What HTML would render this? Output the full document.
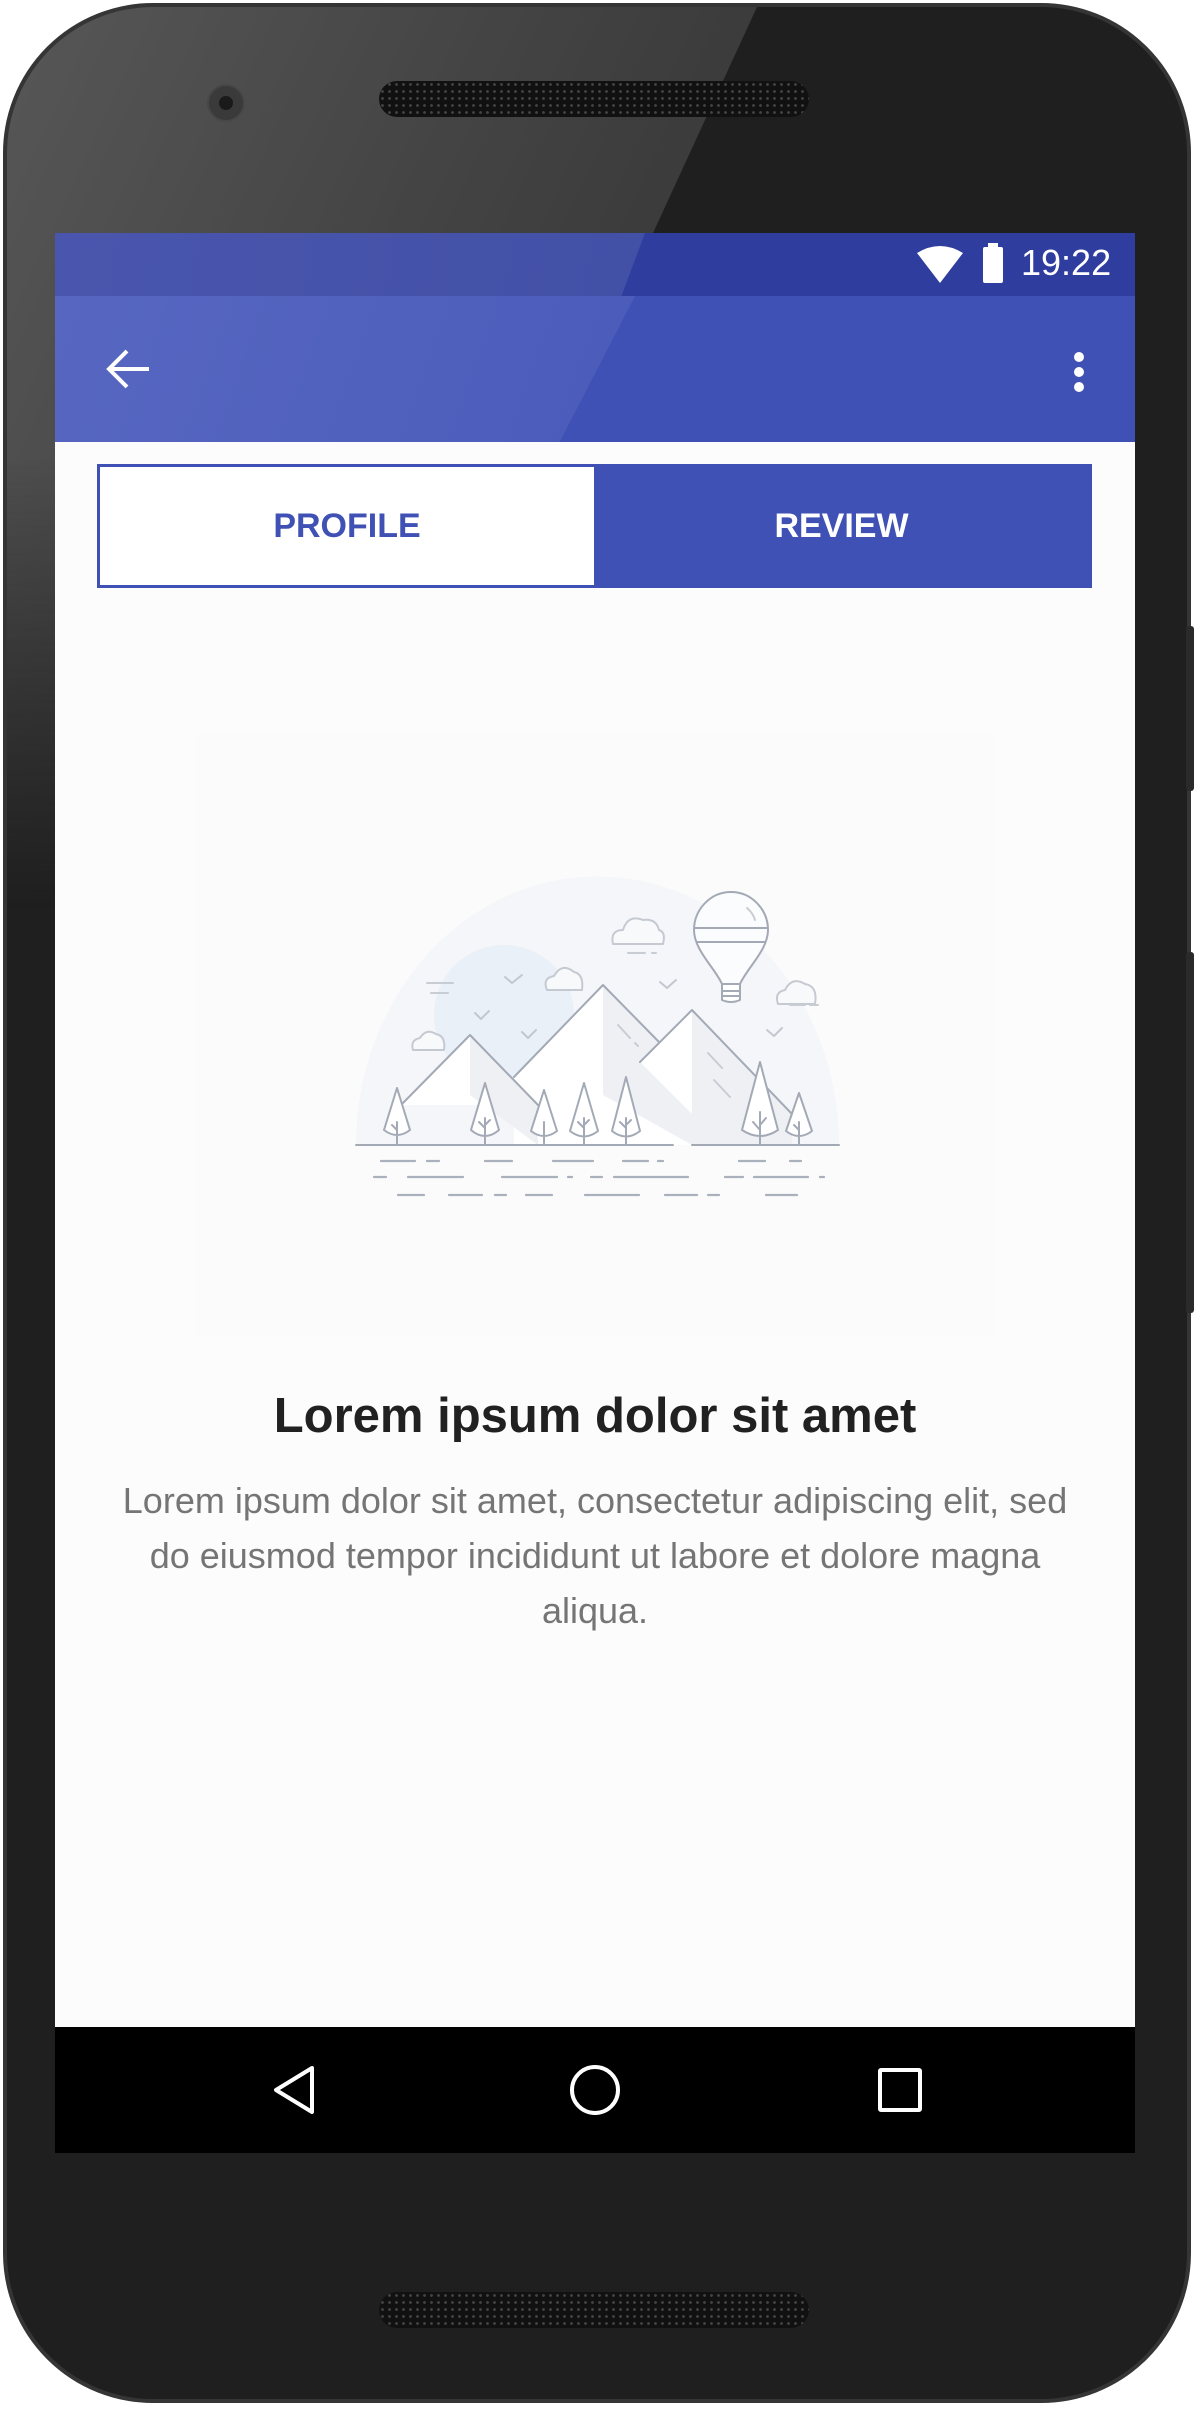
<!DOCTYPE html>
<html><head><meta charset="utf-8"><style>
html,body{margin:0;padding:0;background:#fff;}
body{width:1198px;height:2409px;position:relative;overflow:hidden;font-family:"Liberation Sans",sans-serif;}
.phone{position:absolute;left:3px;top:3px;width:1188px;height:2400px;border-radius:150px;background:#1f1f1f;border:4px solid #353535;box-sizing:border-box;overflow:hidden;}
.sheen{position:absolute;left:0;top:0;width:1198px;height:1000px;background:linear-gradient(115deg,#575757 0%,#444 30%,#333 60%);clip-path:polygon(0 0,750px 0,290px 1000px,0 1000px);-webkit-mask-image:linear-gradient(to bottom,#000 0%,#000 45%,transparent 90%);mask-image:linear-gradient(to bottom,#000 0%,#000 45%,transparent 90%);}
.screen{position:absolute;left:55px;top:233px;width:1080px;height:1920px;background:#fcfcfc;overflow:hidden;}
.status{position:absolute;left:0;top:0;width:1080px;height:63px;background:#2f3d9f;}
.status:before{content:"";position:absolute;left:0;top:0;width:590px;height:63px;background:linear-gradient(100deg,#4a56ad,#4250a6);clip-path:polygon(0 0,100% 0,96% 100%,0 100%);}
.bar{position:absolute;left:0;top:63px;width:1080px;height:146px;background:#3f51b5;}
.bar:before{content:"";position:absolute;left:0;top:0;width:580px;height:146px;background:linear-gradient(110deg,#5767c1,#4a5bba);clip-path:polygon(0 0,100% 0,87% 100%,0 100%);}
.spk{position:absolute;height:36px;border-radius:18px;background:#111;background-image:radial-gradient(#444 1.2px,transparent 1.6px);background-size:7px 7px;}
</style></head><body>
<div class="phone"><div class="sheen"></div></div>
<div style="position:absolute;left:1186px;top:626px;width:8px;height:165px;background:#2a2a2a;border-radius:3px"></div>
<div style="position:absolute;left:1186px;top:952px;width:8px;height:361px;background:#2a2a2a;border-radius:3px"></div>
<div class="spk" style="left:379px;top:81px;width:430px;"></div>
<div class="spk" style="left:379px;top:2292px;width:430px;"></div>
<div style="position:absolute;left:207px;top:84px;width:34px;height:34px;border-radius:50%;background:#3a3a3a;border:2px solid #474747"><div style="margin:10px;width:14px;height:14px;border-radius:50%;background:#1a1a1a"></div></div>

<div class="screen">
 <div class="status">
  <svg style="position:absolute;left:860px;top:12px" width="50" height="40" viewBox="0 0 50 40"><path d="M2 8 Q25 -6 48 8 L25 38 Z" fill="#fff"/></svg>
  <div style="position:absolute;left:928px;top:14px;width:20px;height:36px;background:#fff;border-radius:2px"></div>
  <div style="position:absolute;left:933px;top:10px;width:10px;height:5px;background:#fff"></div>
  <div style="position:absolute;left:966px;top:9px;color:#fff;font-size:36px;">19:22</div>
 </div>
 <div class="bar">
  <svg style="position:absolute;left:50px;top:51px" width="46" height="44" viewBox="0 0 46 44"><path d="M44 22 H6 M22 4 L4 22 L22 40" stroke="#fff" stroke-width="4" fill="none"/></svg>
  <div style="position:absolute;left:1019px;top:56px;width:10px;height:10px;border-radius:50%;background:#fff;box-shadow:0 15px 0 #fff,0 30px 0 #fff"></div>
 </div>
 <div style="position:absolute;left:42px;top:231px;width:995px;height:124px;border:3px solid #3f51b5;box-sizing:border-box;background:#3f51b5">
  <div style="position:absolute;left:0;top:0;width:494px;height:118px;background:#fff;color:#3f51b5;font-size:34px;font-weight:bold;text-align:center;line-height:118px">PROFILE</div>
  <div style="position:absolute;left:494px;top:0;width:495px;height:118px;color:#fff;font-size:34px;font-weight:bold;text-align:center;line-height:118px">REVIEW</div>
 </div>
 <div style="position:absolute;left:140px;top:501px;width:800px;height:602px;background:#fbfbfb"></div>
 <svg style="position:absolute;left:275px;top:617px" width="540" height="350" viewBox="0 0 540 350">
  <g fill="none" stroke="#a3aab6" stroke-width="2" stroke-linecap="round" stroke-linejoin="round">
  <path d="M26 295 A241 268 0 0 1 509 295 Z" fill="#f4f6f9" stroke="none"/>
  <circle cx="174" cy="165" r="70" fill="#e9f0f8" stroke="none"/>
  <path d="M71 255 L140 185 L208 255 Z" fill="#fff" stroke="none"/>
  <path d="M184 227 L273 135 L329 192 L310 212 L362 160 L462 264 L462 295 L184 295 Z" fill="#fff" stroke="none"/>
  <path d="M140 185 L208 255 L208 295 L140 245 Z" fill="#eef0f4" stroke="none"/>
  <path d="M273 135 L329 192 L310 212 L362 264 L362 295 L273 245 Z" fill="#eef0f4" stroke="none"/>
  <path d="M362 160 L462 264 L462 295 L362 295 Z" fill="#eef0f4" stroke="none"/>
  <path d="M71 255 L140 185 L208 255"/>
  <path d="M184 227 L273 135 L329 192"/>
  <path d="M310 212 L362 160 L462 264"/>
  <path d="M288 175 L300 188 M305 193 L308 196 M378 203 L392 218 M384 230 L400 247" stroke="#c8ccd3"/>
  <path d="M26 295 H343 M362 295 H509"/>
  <g fill="#fff">
   <path d="M67 238 L54 280 Q67 290 80 280 Z M67 295 V272 M67 280 L62 275"/>
   <path d="M155 233 L141 280 Q155 292 169 280 Z M155 295 V268 M155 278 L149 272 M155 275 L160 270"/>
   <path d="M214 240 L201 281 Q214 291 227 281 Z M214 295 V272"/>
   <path d="M254 233 L240 281 Q254 292 268 281 Z M254 295 V268 M254 278 L248 272 M254 275 L259 270"/>
   <path d="M296 227 L282 281 Q296 292 310 281 Z M296 295 V268 M296 278 L290 272 M296 275 L301 270"/>
   <path d="M430 212 L412 280 Q430 292 448 280 Z M430 295 V262 M430 280 L423 272 M430 275 L436 268"/>
   <path d="M469 243 L456 281 Q469 291 482 281 Z M469 295 V272 M469 280 L464 275"/>
  </g>
  <g fill="#f8f9fb" stroke="#c5cad2">
   <path d="M283 94 Q280 80 293 80 Q298 64 313 70 Q326 68 329 80 Q336 82 333 94 Z"/>
   <path d="M217 140 Q212 128 224 126 Q232 112 244 122 Q254 124 252 140 Z"/>
   <path d="M448 154 Q444 142 455 140 Q462 126 475 134 Q488 136 485 154 Z"/>
   <path d="M83 200 Q80 190 90 188 Q96 178 106 184 Q116 186 114 200 Z"/>
  </g>
  <path d="M298 103 H315 M322 103 H326 M460 155 H475 M480 155 H488 M97 133 H123 M101 143 H118" stroke="#c8ccd3"/>
  <path d="M175 127 L182 133 L192 125 M145 163 L151 169 L159 161 M192 182 L198 188 L206 180 M330 132 L337 138 L346 130 M437 180 L444 186 L452 178" stroke="#c3c8d0"/>
  <path d="M401 42 C380 42 364 60 364 80 C364 100 385 118 392 134 L410 134 C417 118 438 100 438 80 C438 60 422 42 401 42 Z" fill="#fbfcfd"/>
  <path d="M365 78 H437 M367 92 H435" />
  <path d="M392 134 H410 V150 Q401 154 392 150 Z M392 141 H410 M392 146 H410" fill="#fff"/>
  <path d="M417 58 Q423 63 425 70" stroke="#c8ccd3"/>
  <g stroke="#aab1bc" stroke-width="2.2">
   <path d="M51 311 H85 M97 311 H109 M155 311 H182 M223 311 H263 M293 311 H318 M328 311 H333 M409 311 H435 M460 311 H471"/>
   <path d="M44 327 H56 M78 327 H133 M172 327 H227 M238 327 H242 M261 327 H272 M284 327 H358 M395 327 H413 M424 327 H478 M490 327 H494"/>
   <path d="M68 345 H94 M119 345 H152 M165 345 H176 M196 345 H222 M255 345 H309 M335 345 H367 M378 345 H389 M436 345 H467"/>
  </g>
  </g>
 </svg>
 <div style="position:absolute;left:0;top:1155px;width:1080px;text-align:center;font-size:49px;font-weight:bold;color:#212121">Lorem ipsum dolor sit amet</div>
 <div style="position:absolute;left:50px;top:1240px;width:980px;text-align:center;font-size:36px;line-height:55px;color:#757575">Lorem ipsum dolor sit amet, consectetur adipiscing elit, sed do eiusmod tempor incididunt ut labore et dolore magna aliqua.</div>
 <div style="position:absolute;left:0;top:1794px;width:1080px;height:126px;background:#000">
  <svg style="position:absolute;left:215px;top:37px" width="50" height="52" viewBox="0 0 50 52"><path d="M42 4 L6 26 L42 48 Z" fill="none" stroke="#fff" stroke-width="4" stroke-linejoin="round"/></svg>
  <div style="position:absolute;left:515px;top:38px;width:42px;height:42px;border:4px solid #fff;border-radius:50%"></div>
  <div style="position:absolute;left:823px;top:41px;width:36px;height:36px;border:4px solid #fff;border-radius:3px"></div>
 </div>
</div>
</body></html>
